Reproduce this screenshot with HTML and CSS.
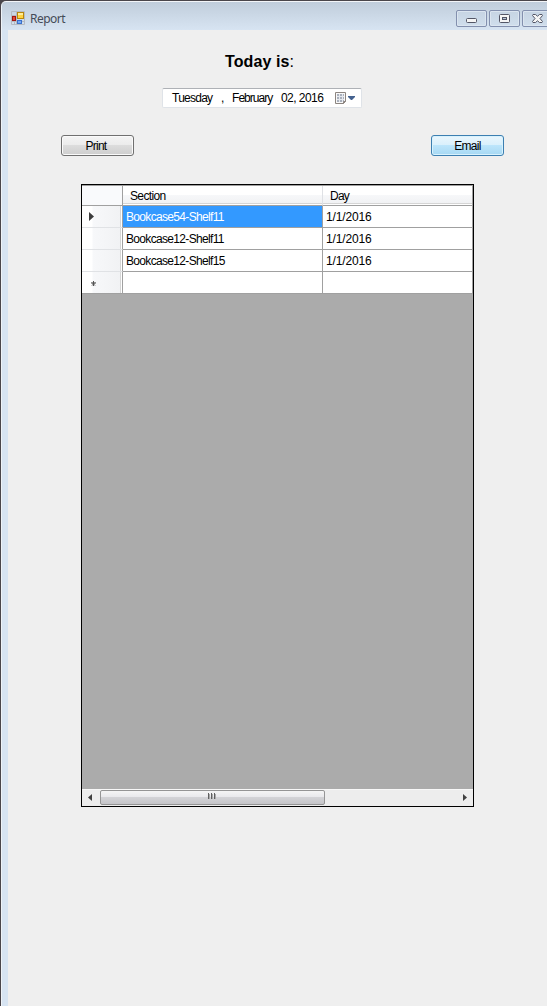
FILE: index.html
```html
<!DOCTYPE html>
<html lang="en">
<head>
<meta charset="utf-8">
<title>Report</title>
<link rel="stylesheet" href="styles.css">
</head>
<body>
<div class="window">
  <header class="titlebar">
    <svg class="app-icon" width="14" height="14" viewBox="0 0 14 14">
      <path d="M.5.5h13v13H.5zM.5 4.500h5M.5 10.500h13M3.500 10v4M5.500 0v14" fill="none" stroke="#b5bac2"/>
      <rect x="6.500" y="1.500" width="6" height="6" fill="#ffd33f" stroke="#b8860b"/>
      <path d="M7 2h5v2H7z" fill="#ffed9b"/>
      <rect x="1.500" y="5.500" width="3" height="4" fill="#df4936" stroke="#a31510"/>
      <rect x="6.500" y="9.500" width="4" height="3" fill="#75a9f4" stroke="#3b70cb"/>
    </svg>
    <span class="title">Report</span>
    <div class="controls">
      <button class="control" aria-label="Minimize"><svg width="11" height="9" viewBox="0 0 11 9"><rect x=".5" y="4.500" width="10" height="4" rx="1" fill="#f5f5f5" stroke="#535666"/></svg></button>
      <button class="control" aria-label="Maximize"><svg width="11" height="9" viewBox="0 0 11 9"><rect x=".5" y=".5" width="10" height="8" rx="1" fill="#f5f5f5" stroke="#535666"/><rect x="3.500" y="3.500" width="4" height="2" fill="#b5c5d8" stroke="#535666"/></svg></button>
      <button class="control close" aria-label="Close"><svg width="11" height="9" viewBox="0 0 11 9"><path d="M1 .5h2.500l2 1.700L7.500.5H10l.5 1L8 4.500l2.500 3-.5 1H7.500l-2-1.700-2 1.700H1l-.5-1L3 4.500.5 1.500z" fill="#f5f5f5" stroke="#535666"/></svg></button>
    </div>
  </header>
  <main class="form">
    <h1 class="heading"><span>Today is</span><span class="colon">:</span></h1>
    <div class="datepicker">
      <span class="weekday">Tuesday</span><span class="comma">,</span><span class="month">February</span><span class="date">02, 2016</span>
      <svg class="calendar" width="21" height="13" viewBox="0 0 21 13">
        <path d="M.5.5h10v9l-2 2h-8z" fill="#f8f8f8" stroke="#8c8580"/>
        <path d="M2 2h7v8H2z" fill="#a9b0bc"/>
        <path d="M2 4.500h7M2 7.500h7M4.500 2v8M7.500 2v8" stroke="#e5e8ee"/>
        <path d="M8.500 11.500v-2h2z" fill="#fff" stroke="#8c8580"/>
        <path d="M13 4h7v1l-3 3h-1l-3-3z" fill="#45628f"/>
      </svg>
    </div>
    <div class="actions">
      <button class="btn"><span class="print">Print</span></button>
      <button class="btn active"><span class="email">Email</span></button>
    </div>
    <section class="grid">
      <div class="row head"><div class="stub"></div><div class="section"><span class="t-section">Section</span></div><div class="day"><span class="t-day">Day</span></div></div>
      <div class="row"><div class="stub"><svg width="5" height="9" viewBox="0 0 5 9"><path d="M0 0l5 4.500L0 9z" fill="#3c3c3c"/></svg></div><div class="section selected"><span class="cell">Bookcase54-Shelf11</span></div><div class="day"><span class="cell">1/1/2016</span></div></div>
      <div class="row"><div class="stub"></div><div class="section"><span class="cell">Bookcase12-Shelf11</span></div><div class="day"><span class="cell">1/1/2016</span></div></div>
      <div class="row"><div class="stub"></div><div class="section"><span class="cell">Bookcase12-Shelf15</span></div><div class="day"><span class="cell">1/1/2016</span></div></div>
      <div class="row"><div class="stub new"><svg width="5" height="5" viewBox="0 0 5 5"><path d="M2.500 0v5M0 2h5M1 4.500l3-3M1 1.500l3 3" stroke="#555"/></svg></div><div class="section"></div><div class="day"></div></div>
      <div class="empty"></div>
      <div class="scrollbar">
        <svg class="arrow" width="4" height="7" viewBox="0 0 4 7"><path d="M4 0v7L0 3.500z" fill="#404040"/></svg>
        <div class="thumb"><svg width="8" height="6" viewBox="0 0 8 6"><path d="M.5 0v6M3.500 0v6M6.500 0v6" stroke="#606060"/><path d="M1.500 1v5M4.500 1v5M7.500 1v5" stroke="#aaa"/></svg></div>
        <svg class="arrow" width="4" height="7" viewBox="0 0 4 7"><path d="M0 0v7l4-3.500z" fill="#404040"/></svg>
      </div>
    </section>
  </main>
</div>
</body>
</html>
```
FILE: styles.css
```css
* { box-sizing: border-box; }
body { margin: 0; width: 547px; height: 1006px; overflow: hidden; background: #4a464b; color: #000; font: 12px/14px "Liberation Sans", Arial, sans-serif; }
button { font: inherit; color: inherit; padding: 0; }
svg { display: block; flex: none; }
span { white-space: nowrap; }
.window { height: 1006px; padding-left: 1px; padding-top: 1px; }
.titlebar { height: 29px; display: flex; align-items: flex-start; background: linear-gradient(#c0cddb, #d7e4f2); border-top: 1px solid #f3f5f8; border-left: 1px solid #eef3f8; border-top-left-radius: 5px; overflow: hidden; }
.app-icon { margin: 9px 0 0 9px; }
.title { margin: 9px 0 0 5px; font: 12px/16px "Noto Sans", sans-serif; color: #454b57; letter-spacing: -.5px; }
.controls { margin: 8px 0 0 auto; display: flex; gap: 2px; margin-right: -6px; }
.control { width: 31px; height: 17px; border: 1px solid #8390ae; border-radius: 2px; background: linear-gradient(#c6d4e3, #d0deec); box-shadow: inset 0 0 0 1px #dbe5f0; display: flex; align-items: center; justify-content: center; }
.form { height: 976px; background: #efefef; border-left: 6px solid #d7e4f2; box-shadow: -1px 0 #eef3f8; margin-left: 1px; display: flex; flex-direction: column; }
.heading { margin: 22px 0 0 217px; height: 20px; font: bold 16px/20px "Liberation Sans", Arial, sans-serif; letter-spacing: .1px; }
.colon { font-weight: normal; }
.datepicker { margin: 16px 0 0 154px; width: 200px; height: 20px; background: #fff; border: 1px solid #dfe3e8; border-top-color: #aeb1b6; border-radius: 2px; display: flex; align-items: center; padding-left: 9px; }
.weekday { width: 49px; letter-spacing: -.75px; }
.comma { width: 11px; }
.month { width: 49px; letter-spacing: -.95px; }
.date { width: 54px; letter-spacing: -.55px; }
.calendar { margin-top: 1px; }
.actions { margin: 27px 43px 0 53px; display: flex; justify-content: space-between; }
.btn { width: 73px; height: 21px; border: 1px solid #707070; border-radius: 3px; background: linear-gradient(#f4f4f4, #ebebeb 49%, #dcdcdc 50%, #cecece); box-shadow: inset 0 0 0 1px #fafafa; padding-right: 3px; letter-spacing: -.75px; }
.active { padding-right: 0; border-color: #3c7fb1; background: linear-gradient(#eaf6fd, #d9f0fc 49%, #bce5fb 50%, #a6d8f3); box-shadow: inset 0 0 0 1px #d8f2fd; }
.grid { margin: 28px 0 0 73px; width: 393px; height: 623px; border: 1px solid #000; background: #ababab; display: flex; flex-direction: column; }
.row { display: grid; grid-template-columns: 41px 200px 150px; height: 22px; background: #fff; }
.row > div { border-right: 1px solid #a0a0a0; border-bottom: 1px solid #a0a0a0; padding-left: 3px; display: flex; align-items: center; }
.row .stub { border-bottom-color: #e0e2e5; background: linear-gradient(90deg, #fff 0, #fff 10px, #f7f8fa 11px, #f1f2f4 38px, #d5d5d5 38px, #d5d5d5 39px, #fff 39px); padding-left: 7px; }
.row .new { border-bottom-color: #a0a0a0; padding: 2px 0 0 9px; }
.row .selected { background: #3399ff; color: #fff; }
.head { height: 21px; border-top: 1px solid #a0a0a0; }
.head > div, .head .stub { background: linear-gradient(#fff 0 45%, #f7f8fa 46%, #f1f2f4 90%, #d5d5d5 90% 95%, #fff 95%); border-bottom-color: #a0a0a0; padding-left: 7px; }
.row.head .section { border-right-color: #dfe1e5; }
.row.head .stub { background: #f9fafc; border-bottom-color: #a0a0a0; }
.section .cell { letter-spacing: -.67px; }
.day .cell { letter-spacing: -.15px; }
.t-section { letter-spacing: -.65px; }
.t-day { letter-spacing: -.75px; }
.empty { flex: 1; }
.scrollbar { height: 17px; background: #ededed; border-top: 1px solid #f8f8f8; padding: 0 6px 2px; display: flex; align-items: center; }
.thumb { width: 225px; height: 15px; margin: 0 auto 0 8px; padding: 0 2px 2px 0; border: 1px solid #959595; border-radius: 2px; background: linear-gradient(#f5f5f5, #e8e8eb 49%, #d3d3d6 50%, #c5c5c9); display: flex; align-items: center; justify-content: center; }
```
